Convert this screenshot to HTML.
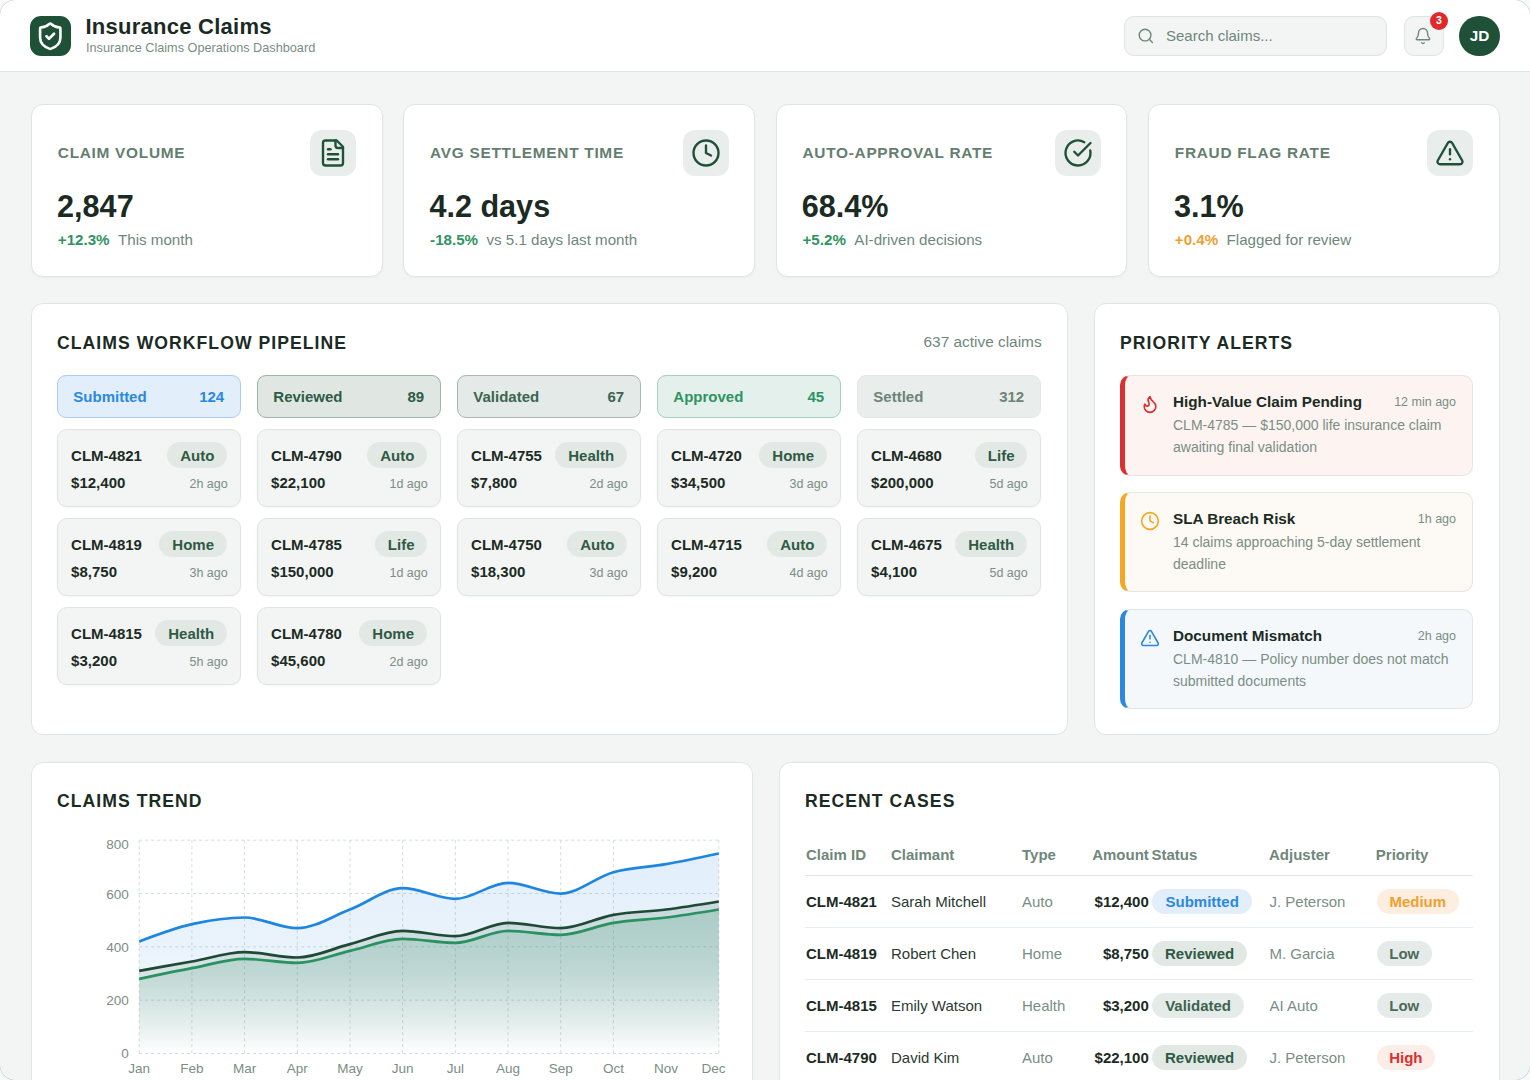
<!DOCTYPE html>
<html><head><meta charset="utf-8"><title>Insurance Claims</title>
<style>
html,body{margin:0;padding:0;}
body{width:1530px;height:1080px;overflow:hidden;position:relative;background:#f3f5f4;font-family:"Liberation Sans",sans-serif;}
.t{position:absolute;white-space:nowrap;}
.b{position:absolute;box-sizing:border-box;}
.i{position:absolute;overflow:visible;}
</style></head><body>
<div class="b" style="left:0;top:0;width:1530px;height:72px;background:#fff;border-bottom:1px solid #dee6e2;"></div>
<div class="b" style="left:30.40px;top:15.80px;width:40.70px;height:40.40px;background:#1f5038;border-radius:11px;"></div>
<svg class="i" style="left:34.90px;top:20.90px;" width="30.5" height="30.5" viewBox="0 0 24 24" fill="none" stroke="#ffffff" stroke-width="2.05" stroke-linecap="round" stroke-linejoin="round"><path d="M20 13c0 5-3.5 7.5-7.66 8.95a1 1 0 0 1-.67-.01C7.5 20.5 4 18 4 13V6a1 1 0 0 1 1-1c2 0 4.5-1.2 6.24-2.72a1.17 1.17 0 0 1 1.52 0C14.51 3.81 17 5 19 5a1 1 0 0 1 1 1z"/><path d="m9 12 2 2 4-4"/></svg>
<div class="t" style="top:15.58px;font-size:22px;line-height:22px;font-weight:700;color:#1b2b23;letter-spacing:0.25px;left:85.50px;">Insurance Claims</div>
<div class="t" style="top:42.05px;font-size:12.7px;line-height:12.7px;font-weight:400;color:#7a8e84;left:86.00px;">Insurance Claims Operations Dashboard</div>
<div class="b" style="left:1124.20px;top:16.00px;width:263.00px;height:39.50px;background:#f3f5f4;border:1px solid #dee6e2;border-radius:10px;"></div>
<svg class="i" style="left:1136.60px;top:26.70px;" width="17.6" height="17.6" viewBox="0 0 24 24" fill="none" stroke="#6f877b" stroke-width="1.9" stroke-linecap="round" stroke-linejoin="round"><circle cx="11" cy="11" r="8"/><path d="m21 21-4.3-4.3"/></svg>
<div class="t" style="top:28.00px;font-size:15px;line-height:15px;font-weight:400;color:#6f877b;left:1166.00px;">Search claims...</div>
<div class="b" style="left:1403.50px;top:16.00px;width:40.00px;height:39.50px;background:#f3f5f4;border:1px solid #dee6e2;border-radius:10px;"></div>
<svg class="i" style="left:1414.20px;top:26.80px;" width="18" height="18" viewBox="0 0 24 24" fill="none" stroke="#6f877b" stroke-width="1.85" stroke-linecap="round" stroke-linejoin="round"><path d="M10.268 21a2 2 0 0 0 3.464 0"/><path d="M3.262 15.326A1 1 0 0 0 4 17h16a1 1 0 0 0 .74-1.673C19.41 13.956 18 12.499 18 8A6 6 0 0 0 6 8c0 4.499-1.411 5.956-2.738 7.326"/></svg>
<div class="b" style="left:1430px;top:11.6px;width:18px;height:18px;border-radius:9px;background:#e0292b;"></div>
<div class="t" style="top:15.11px;font-size:10.5px;line-height:10.5px;font-weight:700;color:#fff;left:1139.00px;width:600px;text-align:center;">3</div>
<div class="b" style="left:1459.3px;top:15.5px;width:40.6px;height:40.6px;border-radius:50%;background:#1f5038;"></div>
<div class="t" style="top:28.05px;font-size:15.3px;line-height:15.3px;font-weight:700;color:#fff;left:1179.60px;width:600px;text-align:center;">JD</div>
<div class="b" style="left:31.00px;top:104.00px;width:351.50px;height:173.00px;background:#fff;border:1px solid #dee6e2;border-radius:12px;box-shadow:0 1px 2px rgba(30,60,45,0.04);"></div>
<div class="t" style="top:144.66px;font-size:15.4px;line-height:15.4px;font-weight:700;color:#647e70;letter-spacing:0.72px;left:57.80px;">CLAIM VOLUME</div>
<div class="b" style="left:310.30px;top:130.00px;width:46.00px;height:46.00px;background:#e9eeec;border-radius:12px;"></div>
<svg class="i" style="left:318.30px;top:138.00px;" width="30" height="30" viewBox="0 0 24 24" fill="none" stroke="#1f5038" stroke-width="1.9" stroke-linecap="round" stroke-linejoin="round"><path d="M15 2H6a2 2 0 0 0-2 2v16a2 2 0 0 0 2 2h12a2 2 0 0 0 2-2V7Z"/><path d="M14 2v4a2 2 0 0 0 2 2h4"/><path d="M10 9H8"/><path d="M16 13H8"/><path d="M16 17H8"/></svg>
<div class="t" style="top:191.00px;font-size:30.6px;line-height:30.6px;font-weight:700;color:#1b2b23;left:57.10px;">2,847</div>
<div class="t" style="left:57.80px;top:231.88px;font-size:15.15px;line-height:15.15px;"><b style="color:#2f9461">+12.3%</b>&nbsp;&nbsp;<span style="color:#6f877b">This month</span></div>
<div class="b" style="left:403.30px;top:104.00px;width:351.50px;height:173.00px;background:#fff;border:1px solid #dee6e2;border-radius:12px;box-shadow:0 1px 2px rgba(30,60,45,0.04);"></div>
<div class="t" style="top:144.66px;font-size:15.4px;line-height:15.4px;font-weight:700;color:#647e70;letter-spacing:0.72px;left:430.10px;">AVG SETTLEMENT TIME</div>
<div class="b" style="left:682.60px;top:130.00px;width:46.00px;height:46.00px;background:#e9eeec;border-radius:12px;"></div>
<svg class="i" style="left:690.60px;top:138.00px;" width="30" height="30" viewBox="0 0 24 24" fill="none" stroke="#1f5038" stroke-width="1.9" stroke-linecap="round" stroke-linejoin="round"><circle cx="12" cy="12" r="10"/><polyline points="12 6 12 12 16 14"/></svg>
<div class="t" style="top:191.00px;font-size:30.6px;line-height:30.6px;font-weight:700;color:#1b2b23;left:429.40px;">4.2 days</div>
<div class="t" style="left:430.10px;top:231.88px;font-size:15.15px;line-height:15.15px;"><b style="color:#2f9461">-18.5%</b>&nbsp;&nbsp;<span style="color:#6f877b">vs 5.1 days last month</span></div>
<div class="b" style="left:775.70px;top:104.00px;width:351.50px;height:173.00px;background:#fff;border:1px solid #dee6e2;border-radius:12px;box-shadow:0 1px 2px rgba(30,60,45,0.04);"></div>
<div class="t" style="top:144.66px;font-size:15.4px;line-height:15.4px;font-weight:700;color:#647e70;letter-spacing:0.72px;left:802.50px;">AUTO-APPROVAL RATE</div>
<div class="b" style="left:1055.00px;top:130.00px;width:46.00px;height:46.00px;background:#e9eeec;border-radius:12px;"></div>
<svg class="i" style="left:1063.00px;top:138.00px;" width="30" height="30" viewBox="0 0 24 24" fill="none" stroke="#1f5038" stroke-width="1.9" stroke-linecap="round" stroke-linejoin="round"><path d="M21.801 10A10 10 0 1 1 17 3.335"/><path d="m9 11 3 3L22 4"/></svg>
<div class="t" style="top:191.00px;font-size:30.6px;line-height:30.6px;font-weight:700;color:#1b2b23;left:801.80px;">68.4%</div>
<div class="t" style="left:802.50px;top:231.88px;font-size:15.15px;line-height:15.15px;"><b style="color:#2f9461">+5.2%</b>&nbsp;&nbsp;<span style="color:#6f877b">AI-driven decisions</span></div>
<div class="b" style="left:1148.00px;top:104.00px;width:351.50px;height:173.00px;background:#fff;border:1px solid #dee6e2;border-radius:12px;box-shadow:0 1px 2px rgba(30,60,45,0.04);"></div>
<div class="t" style="top:144.66px;font-size:15.4px;line-height:15.4px;font-weight:700;color:#647e70;letter-spacing:0.72px;left:1174.80px;">FRAUD FLAG RATE</div>
<div class="b" style="left:1427.30px;top:130.00px;width:46.00px;height:46.00px;background:#e9eeec;border-radius:12px;"></div>
<svg class="i" style="left:1435.30px;top:138.00px;" width="30" height="30" viewBox="0 0 24 24" fill="none" stroke="#1f5038" stroke-width="1.9" stroke-linecap="round" stroke-linejoin="round"><path d="m21.73 18-8-14a2 2 0 0 0-3.48 0l-8 14A2 2 0 0 0 4 21h16a2 2 0 0 0 1.73-3"/><path d="M12 9v4"/><path d="M12 17h.01"/></svg>
<div class="t" style="top:191.00px;font-size:30.6px;line-height:30.6px;font-weight:700;color:#1b2b23;left:1174.10px;">3.1%</div>
<div class="t" style="left:1174.80px;top:231.88px;font-size:15.15px;line-height:15.15px;"><b style="color:#f0a030">+0.4%</b>&nbsp;&nbsp;<span style="color:#6f877b">Flagged for review</span></div>
<div class="b" style="left:31.00px;top:303.30px;width:1037.00px;height:432.20px;background:#fff;border:1px solid #dee6e2;border-radius:12px;"></div>
<div class="t" style="top:334.50px;font-size:17.6px;line-height:17.6px;font-weight:700;color:#1b2b23;letter-spacing:1.05px;left:57.00px;">CLAIMS WORKFLOW PIPELINE</div>
<div class="t" style="top:334.16px;font-size:15.4px;line-height:15.4px;font-weight:400;color:#6f877b;right:488.40px;">637 active claims</div>
<div class="b" style="left:57.20px;top:375.20px;width:183.90px;height:42.50px;background:#e3eefb;border:1px solid #a9cdf2;border-radius:9px;"></div>
<div class="t" style="top:389.10px;font-size:15px;line-height:15px;font-weight:700;color:#2b88e0;left:73.30px;">Submitted</div>
<div class="t" style="top:389.10px;font-size:15px;line-height:15px;font-weight:700;color:#2b88e0;right:1305.80px;">124</div>
<div class="b" style="left:57.20px;top:428.60px;width:183.90px;height:78.40px;background:#f3f5f4;border:1px solid #dee6e2;border-radius:10px;box-shadow:0 1px 2px rgba(30,60,45,0.05);"></div>
<div class="t" style="top:447.50px;font-size:15px;line-height:15px;font-weight:700;color:#1b2b23;left:71.10px;">CLM-4821</div>
<div class="b" style="left:167.40px;top:442.30px;width:59.8px;height:25.5px;border-radius:13px;background:#e2e9e5;"></div>
<div class="t" style="top:447.80px;font-size:15px;line-height:15px;font-weight:700;color:#2f5a44;left:-102.70px;width:600px;text-align:center;">Auto</div>
<div class="t" style="top:475.00px;font-size:15px;line-height:15px;font-weight:700;color:#1b2b23;left:71.10px;">$12,400</div>
<div class="t" style="top:478.32px;font-size:12.5px;line-height:12.5px;font-weight:400;color:#7a8e84;right:1302.30px;">2h ago</div>
<div class="b" style="left:57.20px;top:517.60px;width:183.90px;height:78.40px;background:#f3f5f4;border:1px solid #dee6e2;border-radius:10px;box-shadow:0 1px 2px rgba(30,60,45,0.05);"></div>
<div class="t" style="top:536.50px;font-size:15px;line-height:15px;font-weight:700;color:#1b2b23;left:71.10px;">CLM-4819</div>
<div class="b" style="left:159.20px;top:531.30px;width:68px;height:25.5px;border-radius:13px;background:#e2e9e5;"></div>
<div class="t" style="top:536.80px;font-size:15px;line-height:15px;font-weight:700;color:#2f5a44;left:-106.80px;width:600px;text-align:center;">Home</div>
<div class="t" style="top:564.00px;font-size:15px;line-height:15px;font-weight:700;color:#1b2b23;left:71.10px;">$8,750</div>
<div class="t" style="top:567.32px;font-size:12.5px;line-height:12.5px;font-weight:400;color:#7a8e84;right:1302.30px;">3h ago</div>
<div class="b" style="left:57.20px;top:606.60px;width:183.90px;height:78.40px;background:#f3f5f4;border:1px solid #dee6e2;border-radius:10px;box-shadow:0 1px 2px rgba(30,60,45,0.05);"></div>
<div class="t" style="top:625.50px;font-size:15px;line-height:15px;font-weight:700;color:#1b2b23;left:71.10px;">CLM-4815</div>
<div class="b" style="left:155.20px;top:620.30px;width:72px;height:25.5px;border-radius:13px;background:#e2e9e5;"></div>
<div class="t" style="top:625.80px;font-size:15px;line-height:15px;font-weight:700;color:#2f5a44;left:-108.80px;width:600px;text-align:center;">Health</div>
<div class="t" style="top:653.00px;font-size:15px;line-height:15px;font-weight:700;color:#1b2b23;left:71.10px;">$3,200</div>
<div class="t" style="top:656.32px;font-size:12.5px;line-height:12.5px;font-weight:400;color:#7a8e84;right:1302.30px;">5h ago</div>
<div class="b" style="left:257.20px;top:375.20px;width:183.90px;height:42.50px;background:#e0e7e3;border:1px solid #9fb3a9;border-radius:9px;"></div>
<div class="t" style="top:389.10px;font-size:15px;line-height:15px;font-weight:700;color:#2d5c45;left:273.30px;">Reviewed</div>
<div class="t" style="top:389.10px;font-size:15px;line-height:15px;font-weight:700;color:#2d5c45;right:1105.80px;">89</div>
<div class="b" style="left:257.20px;top:428.60px;width:183.90px;height:78.40px;background:#f3f5f4;border:1px solid #dee6e2;border-radius:10px;box-shadow:0 1px 2px rgba(30,60,45,0.05);"></div>
<div class="t" style="top:447.50px;font-size:15px;line-height:15px;font-weight:700;color:#1b2b23;left:271.10px;">CLM-4790</div>
<div class="b" style="left:367.40px;top:442.30px;width:59.8px;height:25.5px;border-radius:13px;background:#e2e9e5;"></div>
<div class="t" style="top:447.80px;font-size:15px;line-height:15px;font-weight:700;color:#2f5a44;left:97.30px;width:600px;text-align:center;">Auto</div>
<div class="t" style="top:475.00px;font-size:15px;line-height:15px;font-weight:700;color:#1b2b23;left:271.10px;">$22,100</div>
<div class="t" style="top:478.32px;font-size:12.5px;line-height:12.5px;font-weight:400;color:#7a8e84;right:1102.30px;">1d ago</div>
<div class="b" style="left:257.20px;top:517.60px;width:183.90px;height:78.40px;background:#f3f5f4;border:1px solid #dee6e2;border-radius:10px;box-shadow:0 1px 2px rgba(30,60,45,0.05);"></div>
<div class="t" style="top:536.50px;font-size:15px;line-height:15px;font-weight:700;color:#1b2b23;left:271.10px;">CLM-4785</div>
<div class="b" style="left:375.20px;top:531.30px;width:52px;height:25.5px;border-radius:13px;background:#e2e9e5;"></div>
<div class="t" style="top:536.80px;font-size:15px;line-height:15px;font-weight:700;color:#2f5a44;left:101.20px;width:600px;text-align:center;">Life</div>
<div class="t" style="top:564.00px;font-size:15px;line-height:15px;font-weight:700;color:#1b2b23;left:271.10px;">$150,000</div>
<div class="t" style="top:567.32px;font-size:12.5px;line-height:12.5px;font-weight:400;color:#7a8e84;right:1102.30px;">1d ago</div>
<div class="b" style="left:257.20px;top:606.60px;width:183.90px;height:78.40px;background:#f3f5f4;border:1px solid #dee6e2;border-radius:10px;box-shadow:0 1px 2px rgba(30,60,45,0.05);"></div>
<div class="t" style="top:625.50px;font-size:15px;line-height:15px;font-weight:700;color:#1b2b23;left:271.10px;">CLM-4780</div>
<div class="b" style="left:359.20px;top:620.30px;width:68px;height:25.5px;border-radius:13px;background:#e2e9e5;"></div>
<div class="t" style="top:625.80px;font-size:15px;line-height:15px;font-weight:700;color:#2f5a44;left:93.20px;width:600px;text-align:center;">Home</div>
<div class="t" style="top:653.00px;font-size:15px;line-height:15px;font-weight:700;color:#1b2b23;left:271.10px;">$45,600</div>
<div class="t" style="top:656.32px;font-size:12.5px;line-height:12.5px;font-weight:400;color:#7a8e84;right:1102.30px;">2d ago</div>
<div class="b" style="left:457.20px;top:375.20px;width:183.90px;height:42.50px;background:#e4eae7;border:1px solid #a9b8b1;border-radius:9px;"></div>
<div class="t" style="top:389.10px;font-size:15px;line-height:15px;font-weight:700;color:#3b6550;left:473.30px;">Validated</div>
<div class="t" style="top:389.10px;font-size:15px;line-height:15px;font-weight:700;color:#3b6550;right:905.80px;">67</div>
<div class="b" style="left:457.20px;top:428.60px;width:183.90px;height:78.40px;background:#f3f5f4;border:1px solid #dee6e2;border-radius:10px;box-shadow:0 1px 2px rgba(30,60,45,0.05);"></div>
<div class="t" style="top:447.50px;font-size:15px;line-height:15px;font-weight:700;color:#1b2b23;left:471.10px;">CLM-4755</div>
<div class="b" style="left:555.20px;top:442.30px;width:72px;height:25.5px;border-radius:13px;background:#e2e9e5;"></div>
<div class="t" style="top:447.80px;font-size:15px;line-height:15px;font-weight:700;color:#2f5a44;left:291.20px;width:600px;text-align:center;">Health</div>
<div class="t" style="top:475.00px;font-size:15px;line-height:15px;font-weight:700;color:#1b2b23;left:471.10px;">$7,800</div>
<div class="t" style="top:478.32px;font-size:12.5px;line-height:12.5px;font-weight:400;color:#7a8e84;right:902.30px;">2d ago</div>
<div class="b" style="left:457.20px;top:517.60px;width:183.90px;height:78.40px;background:#f3f5f4;border:1px solid #dee6e2;border-radius:10px;box-shadow:0 1px 2px rgba(30,60,45,0.05);"></div>
<div class="t" style="top:536.50px;font-size:15px;line-height:15px;font-weight:700;color:#1b2b23;left:471.10px;">CLM-4750</div>
<div class="b" style="left:567.40px;top:531.30px;width:59.8px;height:25.5px;border-radius:13px;background:#e2e9e5;"></div>
<div class="t" style="top:536.80px;font-size:15px;line-height:15px;font-weight:700;color:#2f5a44;left:297.30px;width:600px;text-align:center;">Auto</div>
<div class="t" style="top:564.00px;font-size:15px;line-height:15px;font-weight:700;color:#1b2b23;left:471.10px;">$18,300</div>
<div class="t" style="top:567.32px;font-size:12.5px;line-height:12.5px;font-weight:400;color:#7a8e84;right:902.30px;">3d ago</div>
<div class="b" style="left:657.20px;top:375.20px;width:183.90px;height:42.50px;background:#e3f0ec;border:1px solid #a6cfc3;border-radius:9px;"></div>
<div class="t" style="top:389.10px;font-size:15px;line-height:15px;font-weight:700;color:#2f9461;left:673.30px;">Approved</div>
<div class="t" style="top:389.10px;font-size:15px;line-height:15px;font-weight:700;color:#2f9461;right:705.80px;">45</div>
<div class="b" style="left:657.20px;top:428.60px;width:183.90px;height:78.40px;background:#f3f5f4;border:1px solid #dee6e2;border-radius:10px;box-shadow:0 1px 2px rgba(30,60,45,0.05);"></div>
<div class="t" style="top:447.50px;font-size:15px;line-height:15px;font-weight:700;color:#1b2b23;left:671.10px;">CLM-4720</div>
<div class="b" style="left:759.20px;top:442.30px;width:68px;height:25.5px;border-radius:13px;background:#e2e9e5;"></div>
<div class="t" style="top:447.80px;font-size:15px;line-height:15px;font-weight:700;color:#2f5a44;left:493.20px;width:600px;text-align:center;">Home</div>
<div class="t" style="top:475.00px;font-size:15px;line-height:15px;font-weight:700;color:#1b2b23;left:671.10px;">$34,500</div>
<div class="t" style="top:478.32px;font-size:12.5px;line-height:12.5px;font-weight:400;color:#7a8e84;right:702.30px;">3d ago</div>
<div class="b" style="left:657.20px;top:517.60px;width:183.90px;height:78.40px;background:#f3f5f4;border:1px solid #dee6e2;border-radius:10px;box-shadow:0 1px 2px rgba(30,60,45,0.05);"></div>
<div class="t" style="top:536.50px;font-size:15px;line-height:15px;font-weight:700;color:#1b2b23;left:671.10px;">CLM-4715</div>
<div class="b" style="left:767.40px;top:531.30px;width:59.8px;height:25.5px;border-radius:13px;background:#e2e9e5;"></div>
<div class="t" style="top:536.80px;font-size:15px;line-height:15px;font-weight:700;color:#2f5a44;left:497.30px;width:600px;text-align:center;">Auto</div>
<div class="t" style="top:564.00px;font-size:15px;line-height:15px;font-weight:700;color:#1b2b23;left:671.10px;">$9,200</div>
<div class="t" style="top:567.32px;font-size:12.5px;line-height:12.5px;font-weight:400;color:#7a8e84;right:702.30px;">4d ago</div>
<div class="b" style="left:857.20px;top:375.20px;width:183.90px;height:42.50px;background:#e9edeb;border:1px solid #e3e8e6;border-radius:9px;"></div>
<div class="t" style="top:389.10px;font-size:15px;line-height:15px;font-weight:700;color:#6b8577;left:873.30px;">Settled</div>
<div class="t" style="top:389.10px;font-size:15px;line-height:15px;font-weight:700;color:#6b8577;right:505.80px;">312</div>
<div class="b" style="left:857.20px;top:428.60px;width:183.90px;height:78.40px;background:#f3f5f4;border:1px solid #dee6e2;border-radius:10px;box-shadow:0 1px 2px rgba(30,60,45,0.05);"></div>
<div class="t" style="top:447.50px;font-size:15px;line-height:15px;font-weight:700;color:#1b2b23;left:871.10px;">CLM-4680</div>
<div class="b" style="left:975.20px;top:442.30px;width:52px;height:25.5px;border-radius:13px;background:#e2e9e5;"></div>
<div class="t" style="top:447.80px;font-size:15px;line-height:15px;font-weight:700;color:#2f5a44;left:701.20px;width:600px;text-align:center;">Life</div>
<div class="t" style="top:475.00px;font-size:15px;line-height:15px;font-weight:700;color:#1b2b23;left:871.10px;">$200,000</div>
<div class="t" style="top:478.32px;font-size:12.5px;line-height:12.5px;font-weight:400;color:#7a8e84;right:502.30px;">5d ago</div>
<div class="b" style="left:857.20px;top:517.60px;width:183.90px;height:78.40px;background:#f3f5f4;border:1px solid #dee6e2;border-radius:10px;box-shadow:0 1px 2px rgba(30,60,45,0.05);"></div>
<div class="t" style="top:536.50px;font-size:15px;line-height:15px;font-weight:700;color:#1b2b23;left:871.10px;">CLM-4675</div>
<div class="b" style="left:955.20px;top:531.30px;width:72px;height:25.5px;border-radius:13px;background:#e2e9e5;"></div>
<div class="t" style="top:536.80px;font-size:15px;line-height:15px;font-weight:700;color:#2f5a44;left:691.20px;width:600px;text-align:center;">Health</div>
<div class="t" style="top:564.00px;font-size:15px;line-height:15px;font-weight:700;color:#1b2b23;left:871.10px;">$4,100</div>
<div class="t" style="top:567.32px;font-size:12.5px;line-height:12.5px;font-weight:400;color:#7a8e84;right:502.30px;">5d ago</div>
<div class="b" style="left:1094.00px;top:303.30px;width:406.00px;height:432.20px;background:#fff;border:1px solid #dee6e2;border-radius:12px;"></div>
<div class="t" style="top:334.50px;font-size:17.6px;line-height:17.6px;font-weight:700;color:#1b2b23;letter-spacing:1.05px;left:1120.00px;">PRIORITY ALERTS</div>
<div class="b" style="left:1120px;top:375.30px;width:352.5px;height:100.4px;background:#fdf4f2;border:1px solid #e3e6e4;border-left:5px solid #dc2f2f;border-radius:10px;"></div>
<svg class="i" style="left:1140.10px;top:393.90px;" width="20" height="20" viewBox="0 0 24 24" fill="none" stroke="#dc2f2f" stroke-width="1.9" stroke-linecap="round" stroke-linejoin="round"><path d="M8.5 14.5A2.5 2.5 0 0 0 11 12c0-1.38-.5-2-1-3-1.072-2.143-.224-4.054 2-6 .5 2.5 2 4.9 4 6.5 2 1.6 3 3.5 3 5.5a7 7 0 1 1-14 0c0-1.153.433-2.294 1-3a2.5 2.5 0 0 0 2.5 2.5z"/></svg>
<div class="t" style="top:393.99px;font-size:15.25px;line-height:15.25px;font-weight:700;color:#1b2b23;left:1173.00px;">High-Value Claim Pending</div>
<div class="t" style="top:396.32px;font-size:12.5px;line-height:12.5px;font-weight:400;color:#7a8e84;right:74.00px;">12 min ago</div>
<div class="t" style="top:417.75px;font-size:14px;line-height:14px;font-weight:400;color:#7a8e84;left:1173.00px;">CLM-4785 — $150,000 life insurance claim</div>
<div class="t" style="top:440.05px;font-size:14px;line-height:14px;font-weight:400;color:#7a8e84;left:1173.00px;">awaiting final validation</div>
<div class="b" style="left:1120px;top:492.10px;width:352.5px;height:100.4px;background:#fdf9f4;border:1px solid #e3e6e4;border-left:5px solid #f5a623;border-radius:10px;"></div>
<svg class="i" style="left:1140.10px;top:510.70px;" width="20" height="20" viewBox="0 0 24 24" fill="none" stroke="#f5a623" stroke-width="1.9" stroke-linecap="round" stroke-linejoin="round"><circle cx="12" cy="12" r="10"/><polyline points="12 6 12 12 16 14"/></svg>
<div class="t" style="top:510.79px;font-size:15.25px;line-height:15.25px;font-weight:700;color:#1b2b23;left:1173.00px;">SLA Breach Risk</div>
<div class="t" style="top:513.12px;font-size:12.5px;line-height:12.5px;font-weight:400;color:#7a8e84;right:74.00px;">1h ago</div>
<div class="t" style="top:534.55px;font-size:14px;line-height:14px;font-weight:400;color:#7a8e84;left:1173.00px;">14 claims approaching 5-day settlement</div>
<div class="t" style="top:556.85px;font-size:14px;line-height:14px;font-weight:400;color:#7a8e84;left:1173.00px;">deadline</div>
<div class="b" style="left:1120px;top:609.10px;width:352.5px;height:100.4px;background:#f4f8fb;border:1px solid #e3e6e4;border-left:5px solid #2b88e0;border-radius:10px;"></div>
<svg class="i" style="left:1140.10px;top:627.70px;" width="20" height="20" viewBox="0 0 24 24" fill="none" stroke="#2b88e0" stroke-width="1.9" stroke-linecap="round" stroke-linejoin="round"><path d="m21.73 18-8-14a2 2 0 0 0-3.48 0l-8 14A2 2 0 0 0 4 21h16a2 2 0 0 0 1.73-3"/><path d="M12 9v4"/><path d="M12 17h.01"/></svg>
<div class="t" style="top:627.79px;font-size:15.25px;line-height:15.25px;font-weight:700;color:#1b2b23;left:1173.00px;">Document Mismatch</div>
<div class="t" style="top:630.12px;font-size:12.5px;line-height:12.5px;font-weight:400;color:#7a8e84;right:74.00px;">2h ago</div>
<div class="t" style="top:651.55px;font-size:14px;line-height:14px;font-weight:400;color:#7a8e84;left:1173.00px;">CLM-4810 — Policy number does not match</div>
<div class="t" style="top:673.85px;font-size:14px;line-height:14px;font-weight:400;color:#7a8e84;left:1173.00px;">submitted documents</div>
<div class="b" style="left:31.00px;top:761.50px;width:722.00px;height:400.00px;background:#fff;border:1px solid #dee6e2;border-radius:12px;"></div>
<div class="t" style="top:792.50px;font-size:17.6px;line-height:17.6px;font-weight:700;color:#1b2b23;letter-spacing:1.05px;left:57.00px;">CLAIMS TREND</div>
<svg class="i" style="left:0;top:0" width="1530" height="1080" viewBox="0 0 1530 1080"><defs><linearGradient id="gb" x1="0" y1="0" x2="0" y2="1"><stop offset="0%" stop-color="#2b88e0" stop-opacity="0.14"/><stop offset="55%" stop-color="#2b88e0" stop-opacity="0.09"/><stop offset="100%" stop-color="#2b88e0" stop-opacity="0"/></linearGradient><linearGradient id="gd" x1="0" y1="0" x2="0" y2="1"><stop offset="0%" stop-color="#1f5038" stop-opacity="0.15"/><stop offset="50%" stop-color="#1f5038" stop-opacity="0.105"/><stop offset="82%" stop-color="#1f5038" stop-opacity="0.04"/><stop offset="100%" stop-color="#1f5038" stop-opacity="0"/></linearGradient><linearGradient id="gg" x1="0" y1="0" x2="0" y2="1"><stop offset="0%" stop-color="#2f9461" stop-opacity="0.2"/><stop offset="45%" stop-color="#2f9461" stop-opacity="0.14"/><stop offset="80%" stop-color="#2f9461" stop-opacity="0.055"/><stop offset="100%" stop-color="#2f9461" stop-opacity="0"/></linearGradient></defs><line x1="139.2" y1="1053.50" x2="718.79" y2="1053.50" stroke="#d3ddd8" stroke-dasharray="3 3"/><line x1="139.2" y1="1000.17" x2="718.79" y2="1000.17" stroke="#d3ddd8" stroke-dasharray="3 3"/><line x1="139.2" y1="946.85" x2="718.79" y2="946.85" stroke="#d3ddd8" stroke-dasharray="3 3"/><line x1="139.2" y1="893.53" x2="718.79" y2="893.53" stroke="#d3ddd8" stroke-dasharray="3 3"/><line x1="139.2" y1="840.20" x2="718.79" y2="840.20" stroke="#d3ddd8" stroke-dasharray="3 3"/><line x1="139.20" y1="840.2" x2="139.20" y2="1053.5" stroke="#d3ddd8" stroke-dasharray="3 3"/><line x1="191.89" y1="840.2" x2="191.89" y2="1053.5" stroke="#d3ddd8" stroke-dasharray="3 3"/><line x1="244.58" y1="840.2" x2="244.58" y2="1053.5" stroke="#d3ddd8" stroke-dasharray="3 3"/><line x1="297.27" y1="840.2" x2="297.27" y2="1053.5" stroke="#d3ddd8" stroke-dasharray="3 3"/><line x1="349.96" y1="840.2" x2="349.96" y2="1053.5" stroke="#d3ddd8" stroke-dasharray="3 3"/><line x1="402.65" y1="840.2" x2="402.65" y2="1053.5" stroke="#d3ddd8" stroke-dasharray="3 3"/><line x1="455.34" y1="840.2" x2="455.34" y2="1053.5" stroke="#d3ddd8" stroke-dasharray="3 3"/><line x1="508.03" y1="840.2" x2="508.03" y2="1053.5" stroke="#d3ddd8" stroke-dasharray="3 3"/><line x1="560.72" y1="840.2" x2="560.72" y2="1053.5" stroke="#d3ddd8" stroke-dasharray="3 3"/><line x1="613.41" y1="840.2" x2="613.41" y2="1053.5" stroke="#d3ddd8" stroke-dasharray="3 3"/><line x1="718.79" y1="840.2" x2="718.79" y2="1053.5" stroke="#d3ddd8" stroke-dasharray="3 3"/><path d="M139.20,941.52C156.76,934.85 174.33,928.19 191.89,924.19C209.45,920.19 227.02,917.52 244.58,917.52C262.14,917.52 279.71,928.19 297.27,928.19C314.83,928.19 332.40,916.19 349.96,909.52C367.52,902.86 385.09,888.19 402.65,888.19C420.21,888.19 437.78,898.86 455.34,898.86C472.90,898.86 490.47,882.86 508.03,882.86C525.59,882.86 543.16,893.53 560.72,893.53C578.28,893.53 595.85,877.08 613.41,872.20C630.97,867.31 648.54,867.31 666.10,864.20C683.66,861.09 701.23,857.31 718.79,853.53L718.79,1053.5L139.2,1053.5Z" fill="url(#gb)" stroke="none"/><path d="M139.20,970.85C156.76,967.74 174.33,964.62 191.89,961.51C209.45,958.40 227.02,952.18 244.58,952.18C262.14,952.18 279.71,957.51 297.27,957.51C314.83,957.51 332.40,948.63 349.96,944.18C367.52,939.74 385.09,930.85 402.65,930.85C420.21,930.85 437.78,936.19 455.34,936.19C472.90,936.19 490.47,922.85 508.03,922.85C525.59,922.85 543.16,928.19 560.72,928.19C578.28,928.19 595.85,917.97 613.41,914.86C630.97,911.74 648.54,911.74 666.10,909.52C683.66,907.30 701.23,904.41 718.79,901.52L718.79,1053.5L139.2,1053.5Z" fill="url(#gd)" stroke="none"/><path d="M139.20,978.85C156.76,975.18 174.33,971.51 191.89,968.18C209.45,964.85 227.02,958.85 244.58,958.85C262.14,958.85 279.71,962.85 297.27,962.85C314.83,962.85 332.40,954.85 349.96,950.85C367.52,946.85 385.09,938.85 402.65,938.85C420.21,938.85 437.78,942.85 455.34,942.85C472.90,942.85 490.47,930.85 508.03,930.85C525.59,930.85 543.16,934.85 560.72,934.85C578.28,934.85 595.85,925.74 613.41,922.85C630.97,919.97 648.54,919.74 666.10,917.52C683.66,915.30 701.23,912.41 718.79,909.52L718.79,1053.5L139.2,1053.5Z" fill="url(#gg)" stroke="none"/><path d="M139.20,941.52C156.76,934.85 174.33,928.19 191.89,924.19C209.45,920.19 227.02,917.52 244.58,917.52C262.14,917.52 279.71,928.19 297.27,928.19C314.83,928.19 332.40,916.19 349.96,909.52C367.52,902.86 385.09,888.19 402.65,888.19C420.21,888.19 437.78,898.86 455.34,898.86C472.90,898.86 490.47,882.86 508.03,882.86C525.59,882.86 543.16,893.53 560.72,893.53C578.28,893.53 595.85,877.08 613.41,872.20C630.97,867.31 648.54,867.31 666.10,864.20C683.66,861.09 701.23,857.31 718.79,853.53" fill="none" stroke="#1f86e0" stroke-width="2.7"/><path d="M139.20,970.85C156.76,967.74 174.33,964.62 191.89,961.51C209.45,958.40 227.02,952.18 244.58,952.18C262.14,952.18 279.71,957.51 297.27,957.51C314.83,957.51 332.40,948.63 349.96,944.18C367.52,939.74 385.09,930.85 402.65,930.85C420.21,930.85 437.78,936.19 455.34,936.19C472.90,936.19 490.47,922.85 508.03,922.85C525.59,922.85 543.16,928.19 560.72,928.19C578.28,928.19 595.85,917.97 613.41,914.86C630.97,911.74 648.54,911.74 666.10,909.52C683.66,907.30 701.23,904.41 718.79,901.52" fill="none" stroke="#1f4a33" stroke-width="2.7"/><path d="M139.20,978.85C156.76,975.18 174.33,971.51 191.89,968.18C209.45,964.85 227.02,958.85 244.58,958.85C262.14,958.85 279.71,962.85 297.27,962.85C314.83,962.85 332.40,954.85 349.96,950.85C367.52,946.85 385.09,938.85 402.65,938.85C420.21,938.85 437.78,942.85 455.34,942.85C472.90,942.85 490.47,930.85 508.03,930.85C525.59,930.85 543.16,934.85 560.72,934.85C578.28,934.85 595.85,925.74 613.41,922.85C630.97,919.97 648.54,919.74 666.10,917.52C683.66,915.30 701.23,912.41 718.79,909.52" fill="none" stroke="#2a9160" stroke-width="2.7"/></svg>
<div class="t" style="top:838.27px;font-size:13.5px;line-height:13.5px;font-weight:400;color:#7a8e84;right:1401.20px;">800</div>
<div class="t" style="top:887.97px;font-size:13.5px;line-height:13.5px;font-weight:400;color:#7a8e84;right:1401.20px;">600</div>
<div class="t" style="top:940.57px;font-size:13.5px;line-height:13.5px;font-weight:400;color:#7a8e84;right:1401.20px;">400</div>
<div class="t" style="top:994.47px;font-size:13.5px;line-height:13.5px;font-weight:400;color:#7a8e84;right:1401.20px;">200</div>
<div class="t" style="top:1046.57px;font-size:13.5px;line-height:13.5px;font-weight:400;color:#7a8e84;right:1401.20px;">0</div>
<div class="t" style="top:1061.57px;font-size:13.5px;line-height:13.5px;font-weight:400;color:#7a8e84;left:-160.80px;width:600px;text-align:center;">Jan</div>
<div class="t" style="top:1061.57px;font-size:13.5px;line-height:13.5px;font-weight:400;color:#7a8e84;left:-108.11px;width:600px;text-align:center;">Feb</div>
<div class="t" style="top:1061.57px;font-size:13.5px;line-height:13.5px;font-weight:400;color:#7a8e84;left:-55.42px;width:600px;text-align:center;">Mar</div>
<div class="t" style="top:1061.57px;font-size:13.5px;line-height:13.5px;font-weight:400;color:#7a8e84;left:-2.73px;width:600px;text-align:center;">Apr</div>
<div class="t" style="top:1061.57px;font-size:13.5px;line-height:13.5px;font-weight:400;color:#7a8e84;left:49.96px;width:600px;text-align:center;">May</div>
<div class="t" style="top:1061.57px;font-size:13.5px;line-height:13.5px;font-weight:400;color:#7a8e84;left:102.65px;width:600px;text-align:center;">Jun</div>
<div class="t" style="top:1061.57px;font-size:13.5px;line-height:13.5px;font-weight:400;color:#7a8e84;left:155.34px;width:600px;text-align:center;">Jul</div>
<div class="t" style="top:1061.57px;font-size:13.5px;line-height:13.5px;font-weight:400;color:#7a8e84;left:208.03px;width:600px;text-align:center;">Aug</div>
<div class="t" style="top:1061.57px;font-size:13.5px;line-height:13.5px;font-weight:400;color:#7a8e84;left:260.72px;width:600px;text-align:center;">Sep</div>
<div class="t" style="top:1061.57px;font-size:13.5px;line-height:13.5px;font-weight:400;color:#7a8e84;left:313.41px;width:600px;text-align:center;">Oct</div>
<div class="t" style="top:1061.57px;font-size:13.5px;line-height:13.5px;font-weight:400;color:#7a8e84;left:366.10px;width:600px;text-align:center;">Nov</div>
<div class="t" style="top:1061.57px;font-size:13.5px;line-height:13.5px;font-weight:400;color:#7a8e84;left:413.49px;width:600px;text-align:center;">Dec</div>
<div class="b" style="left:778.50px;top:761.50px;width:721.50px;height:400.00px;background:#fff;border:1px solid #dee6e2;border-radius:12px;"></div>
<div class="t" style="top:792.50px;font-size:17.6px;line-height:17.6px;font-weight:700;color:#1b2b23;letter-spacing:1.05px;left:805.00px;">RECENT CASES</div>
<div class="t" style="top:846.80px;font-size:15px;line-height:15px;font-weight:700;color:#6f877b;left:806.00px;">Claim ID</div>
<div class="t" style="top:846.80px;font-size:15px;line-height:15px;font-weight:700;color:#6f877b;left:891.00px;">Claimant</div>
<div class="t" style="top:846.80px;font-size:15px;line-height:15px;font-weight:700;color:#6f877b;left:1022.00px;">Type</div>
<div class="t" style="top:846.80px;font-size:15px;line-height:15px;font-weight:700;color:#6f877b;right:381.20px;">Amount</div>
<div class="t" style="top:846.80px;font-size:15px;line-height:15px;font-weight:700;color:#6f877b;left:1151.50px;">Status</div>
<div class="t" style="top:846.80px;font-size:15px;line-height:15px;font-weight:700;color:#6f877b;left:1269.00px;">Adjuster</div>
<div class="t" style="top:846.80px;font-size:15px;line-height:15px;font-weight:700;color:#6f877b;left:1375.80px;">Priority</div>
<div class="b" style="left:805.3px;top:874.5px;width:667.5px;height:1.2px;background:#e1e8e5;"></div>
<div class="t" style="top:893.60px;font-size:15px;line-height:15px;font-weight:700;color:#1b2b23;left:806.00px;">CLM-4821</div>
<div class="t" style="top:893.60px;font-size:15px;line-height:15px;font-weight:400;color:#2b3a32;left:891.00px;">Sarah Mitchell</div>
<div class="t" style="top:893.60px;font-size:15px;line-height:15px;font-weight:400;color:#7a8e84;left:1022.00px;">Auto</div>
<div class="t" style="top:893.60px;font-size:15px;line-height:15px;font-weight:700;color:#1b2b23;right:381.20px;">$12,400</div>
<div class="b" style="left:1152.1px;top:888.60px;width:100.2px;height:25px;border-radius:13px;background:#e3eefb;"></div>
<div class="t" style="top:893.60px;font-size:15px;line-height:15px;font-weight:700;color:#2b88e0;left:902.20px;width:600px;text-align:center;">Submitted</div>
<div class="b" style="left:1376.8px;top:888.60px;width:82px;height:25px;border-radius:13px;background:#fdeee0;"></div>
<div class="t" style="top:893.60px;font-size:15px;line-height:15px;font-weight:700;color:#f0a030;left:1117.80px;width:600px;text-align:center;">Medium</div>
<div class="t" style="top:893.60px;font-size:15px;line-height:15px;font-weight:400;color:#7a8e84;left:1269.50px;">J. Peterson</div>
<div class="b" style="left:805.3px;top:926.60px;width:667.5px;height:1.2px;background:#e6ece9;"></div>
<div class="t" style="top:945.60px;font-size:15px;line-height:15px;font-weight:700;color:#1b2b23;left:806.00px;">CLM-4819</div>
<div class="t" style="top:945.60px;font-size:15px;line-height:15px;font-weight:400;color:#2b3a32;left:891.00px;">Robert Chen</div>
<div class="t" style="top:945.60px;font-size:15px;line-height:15px;font-weight:400;color:#7a8e84;left:1022.00px;">Home</div>
<div class="t" style="top:945.60px;font-size:15px;line-height:15px;font-weight:700;color:#1b2b23;right:381.20px;">$8,750</div>
<div class="b" style="left:1152.1px;top:940.60px;width:95px;height:25px;border-radius:13px;background:#e2e9e5;"></div>
<div class="t" style="top:945.60px;font-size:15px;line-height:15px;font-weight:700;color:#2f5a44;left:899.60px;width:600px;text-align:center;">Reviewed</div>
<div class="b" style="left:1376.8px;top:940.60px;width:55px;height:25px;border-radius:13px;background:#e5ebe8;"></div>
<div class="t" style="top:945.60px;font-size:15px;line-height:15px;font-weight:700;color:#4d6b5c;left:1104.30px;width:600px;text-align:center;">Low</div>
<div class="t" style="top:945.60px;font-size:15px;line-height:15px;font-weight:400;color:#7a8e84;left:1269.50px;">M. Garcia</div>
<div class="b" style="left:805.3px;top:978.60px;width:667.5px;height:1.2px;background:#e6ece9;"></div>
<div class="t" style="top:997.60px;font-size:15px;line-height:15px;font-weight:700;color:#1b2b23;left:806.00px;">CLM-4815</div>
<div class="t" style="top:997.60px;font-size:15px;line-height:15px;font-weight:400;color:#2b3a32;left:891.00px;">Emily Watson</div>
<div class="t" style="top:997.60px;font-size:15px;line-height:15px;font-weight:400;color:#7a8e84;left:1022.00px;">Health</div>
<div class="t" style="top:997.60px;font-size:15px;line-height:15px;font-weight:700;color:#1b2b23;right:381.20px;">$3,200</div>
<div class="b" style="left:1152.1px;top:992.60px;width:92px;height:25px;border-radius:13px;background:#e5ebe8;"></div>
<div class="t" style="top:997.60px;font-size:15px;line-height:15px;font-weight:700;color:#3e6350;left:898.10px;width:600px;text-align:center;">Validated</div>
<div class="b" style="left:1376.8px;top:992.60px;width:55px;height:25px;border-radius:13px;background:#e5ebe8;"></div>
<div class="t" style="top:997.60px;font-size:15px;line-height:15px;font-weight:700;color:#4d6b5c;left:1104.30px;width:600px;text-align:center;">Low</div>
<div class="t" style="top:997.60px;font-size:15px;line-height:15px;font-weight:400;color:#7a8e84;left:1269.50px;">AI Auto</div>
<div class="b" style="left:805.3px;top:1030.60px;width:667.5px;height:1.2px;background:#e6ece9;"></div>
<div class="t" style="top:1049.60px;font-size:15px;line-height:15px;font-weight:700;color:#1b2b23;left:806.00px;">CLM-4790</div>
<div class="t" style="top:1049.60px;font-size:15px;line-height:15px;font-weight:400;color:#2b3a32;left:891.00px;">David Kim</div>
<div class="t" style="top:1049.60px;font-size:15px;line-height:15px;font-weight:400;color:#7a8e84;left:1022.00px;">Auto</div>
<div class="t" style="top:1049.60px;font-size:15px;line-height:15px;font-weight:700;color:#1b2b23;right:381.20px;">$22,100</div>
<div class="b" style="left:1152.1px;top:1044.60px;width:95px;height:25px;border-radius:13px;background:#e2e9e5;"></div>
<div class="t" style="top:1049.60px;font-size:15px;line-height:15px;font-weight:700;color:#2f5a44;left:899.60px;width:600px;text-align:center;">Reviewed</div>
<div class="b" style="left:1376.8px;top:1044.60px;width:58px;height:25px;border-radius:13px;background:#fdede8;"></div>
<div class="t" style="top:1049.60px;font-size:15px;line-height:15px;font-weight:700;color:#dc2f2f;left:1105.80px;width:600px;text-align:center;">High</div>
<div class="t" style="top:1049.60px;font-size:15px;line-height:15px;font-weight:400;color:#7a8e84;left:1269.50px;">J. Peterson</div>
<div class="b" style="left:0;top:0;width:15px;height:15px;background:radial-gradient(circle at 15px 15px, rgba(0,0,0,0) 14.4px, rgba(175,190,183,0.55) 15px, #f7fafa 15.9px);"></div>
<div class="b" style="right:0;top:0;width:15px;height:15px;background:radial-gradient(circle at 0px 15px, rgba(0,0,0,0) 14.4px, rgba(175,190,183,0.55) 15px, #f7fafa 15.9px);"></div>
<div class="b" style="left:0;bottom:0;width:15px;height:15px;background:radial-gradient(circle at 15px 0px, rgba(0,0,0,0) 14.4px, rgba(175,190,183,0.55) 15px, #f7fafa 15.9px);"></div>
<div class="b" style="right:0;bottom:0;width:15px;height:15px;background:radial-gradient(circle at 0px 0px, rgba(0,0,0,0) 14.4px, rgba(175,190,183,0.55) 15px, #f7fafa 15.9px);"></div>
</body></html>
